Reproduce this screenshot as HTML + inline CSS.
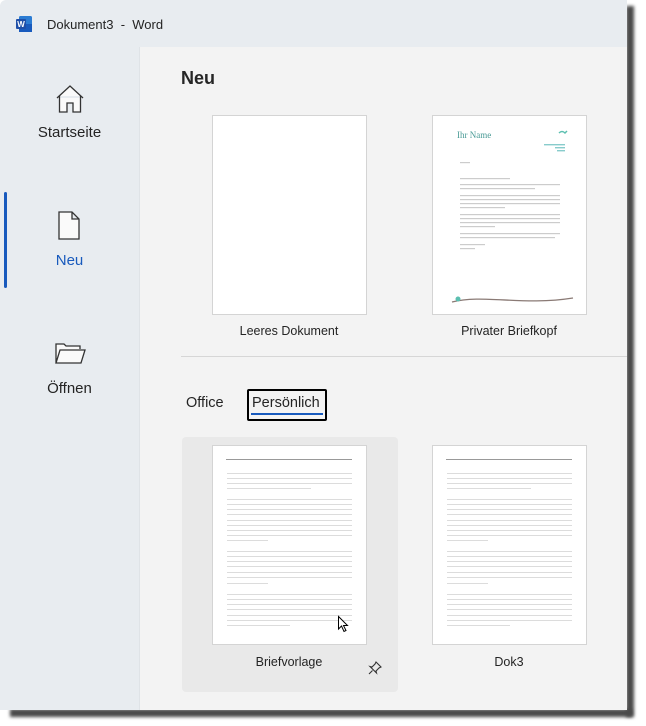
<!DOCTYPE html>
<html><head><meta charset="utf-8"><style>
*{margin:0;padding:0;box-sizing:border-box}
body{width:646px;height:726px;background:#fff;position:relative;overflow:hidden;font-family:"Liberation Sans",sans-serif;color:#242424}
.win{position:absolute;left:0;top:0;width:627px;height:710px;background:#e8ecf0;overflow:hidden;border-top-left-radius:6px}
.content{position:absolute;left:139px;top:47px;right:0;bottom:0;background:#f3f3f3;border-left:1px solid #dfe3e7}
.abs{position:absolute}
.page{position:absolute;background:#fff;border:1px solid #d4d4d4}
.lbl{position:absolute;font-size:12.5px;text-align:center;width:220px}
.side{position:absolute;width:139px;text-align:center;font-size:15px}
</style></head><body>
<div class="abs" style="left:10px;top:709px;width:622px;height:8px;background:#4a4a4a;filter:blur(1.5px)"></div>
<div class="abs" style="left:626px;top:6px;width:8px;height:711px;background:#4a4a4a;filter:blur(1.5px)"></div>
<div class="win">
  <svg class="abs" style="left:16px;top:16px" width="17" height="16" viewBox="0 0 17 16">
    <rect x="3" y="0" width="13" height="16" rx="1.5" fill="#2b7cd3"/>
    <rect x="3" y="8" width="13" height="8" fill="#185abd"/>
    <rect x="0" y="3" width="10" height="10" rx="1" fill="#1e4fa8"/>
    <text x="5" y="11" font-size="8" font-weight="bold" fill="#fff" text-anchor="middle" font-family="Liberation Sans">W</text>
  </svg>
  <div class="abs" style="left:47px;top:17px;font-size:13px">Dokument3&nbsp; - &nbsp;Word</div>

  <svg class="abs" style="left:55px;top:84px" width="30" height="30" viewBox="0 0 30 30" fill="#fafafa" stroke="#333" stroke-width="1.3">
    <path d="M2 14 L15 2 L28 14 M4.5 12 V28 H12 V19 H18 V28 H25.5 V12"/>
  </svg>
  <div class="side" style="top:124px">Startseite</div>
  <div class="abs" style="left:4px;top:192px;width:3px;height:96px;background:#185abd;border-radius:2px"></div>
  <svg class="abs" style="left:58px;top:211px" width="24" height="30" viewBox="0 0 24 30" fill="#fafafa" stroke="#333" stroke-width="1.3">
    <path d="M1 1 H14 L21 8 V28 H1 Z M14 1 V8 H21"/>
  </svg>
  <div class="side" style="top:252px;color:#185abd">Neu</div>
  <svg class="abs" style="left:55px;top:343px" width="32" height="22" viewBox="0 0 32 22" fill="#fafafa" stroke="#333" stroke-width="1.3">
    <path d="M1 20 V1 H9 L11 3 H25 V6 M1 20 L5 7 H30 L26 20 Z"/>
  </svg>
  <div class="side" style="top:380px">Öffnen</div>

  <div class="content">
    <div class="abs" style="left:41px;top:21px;font-size:18px;font-weight:bold;color:#262626">Neu</div>
    <div class="page" style="left:72px;top:68px;width:155px;height:200px"></div>
    <div class="lbl" style="left:39px;top:277px">Leeres Dokument</div>
    <div class="page" style="left:292px;top:68px;width:155px;height:200px">
      <svg width="153" height="198" viewBox="0 0 153 198">
        <text x="24" y="22" font-family="Liberation Serif" font-size="9" fill="#4a9b96">Ihr Name</text>
        <path d="M126 17 q3 -3 6 0 l2 -2" stroke="#5bbfb0" stroke-width="1.5" fill="none"/>
        <rect x="111" y="28" width="21" height="1.4" fill="#8cc"/><rect x="122" y="31" width="10" height="1.4" fill="#8cc"/><rect x="124" y="34" width="8" height="1.4" fill="#8cc"/>
        <g fill="#ccc">
          <rect x="27" y="46" width="10" height="1.2"/>
          <rect x="27" y="62" width="50" height="1.2"/>
          <rect x="27" y="68" width="100" height="1.2"/><rect x="27" y="72" width="75" height="1.2"/>
          <rect x="27" y="79" width="100" height="1.2"/><rect x="27" y="83" width="100" height="1.2"/><rect x="27" y="87" width="100" height="1.2"/><rect x="27" y="91" width="45" height="1.2"/>
          <rect x="27" y="98" width="100" height="1.2"/><rect x="27" y="102" width="100" height="1.2"/><rect x="27" y="106" width="100" height="1.2"/><rect x="27" y="110" width="35" height="1.2"/>
          <rect x="27" y="117" width="100" height="1.2"/><rect x="27" y="121" width="95" height="1.2"/>
          <rect x="27" y="128" width="25" height="1.2"/><rect x="27" y="132" width="15" height="1.2"/>
        </g>
        <path d="M19 186 C50 178 90 190 140 182" stroke="#8a7a75" stroke-width="1.3" fill="none"/>
        <circle cx="25" cy="183" r="2.5" fill="#5bbfb0"/>
      </svg>
    </div>
    <div class="lbl" style="left:259px;top:277px">Privater Briefkopf</div>
    <div class="abs" style="left:41px;top:309px;width:450px;height:1px;background:#d6d6d6"></div>
    <div class="abs" style="left:46px;top:348px;font-size:14.5px">Office</div>
    <div class="abs" style="left:107px;top:342px;width:80px;height:32px;border:2px solid #000;border-radius:2px"></div>
    <div class="abs" style="left:112px;top:348px;font-size:14.5px">Persönlich</div>
    <div class="abs" style="left:111px;top:366px;width:72px;height:2px;background:#185abd"></div>
    <div class="abs" style="left:42px;top:390px;width:216px;height:255px;background:#e9e9e9;border-radius:4px"></div>
    <div class="page" style="left:72px;top:398px;width:155px;height:200px"><svg width="153" height="198"><g id="ln">
      <rect x="13" y="13" width="126" height="1" fill="#999"/>
      <g fill="#dcdcdc">
      <rect x="14" y="27" width="125" height="1"/><rect x="14" y="32" width="125" height="1"/><rect x="14" y="37" width="125" height="1"/><rect x="14" y="42" width="84" height="1"/>
      <rect x="14" y="53" width="125" height="1"/><rect x="14" y="58" width="125" height="1"/><rect x="14" y="63" width="125" height="1"/><rect x="14" y="68" width="125" height="1"/><rect x="14" y="74" width="125" height="1"/><rect x="14" y="79" width="125" height="1"/><rect x="14" y="84" width="125" height="1"/><rect x="14" y="89" width="125" height="1"/><rect x="14" y="94" width="41" height="1"/>
      <rect x="14" y="105" width="125" height="1"/><rect x="14" y="110" width="125" height="1"/><rect x="14" y="115" width="125" height="1"/><rect x="14" y="120" width="125" height="1"/><rect x="14" y="126" width="125" height="1"/><rect x="14" y="131" width="125" height="1"/><rect x="14" y="137" width="41" height="1"/>
      <rect x="14" y="148" width="125" height="1"/><rect x="14" y="153" width="125" height="1"/><rect x="14" y="158" width="125" height="1"/><rect x="14" y="163" width="125" height="1"/><rect x="14" y="169" width="125" height="1"/><rect x="14" y="174" width="125" height="1"/><rect x="14" y="179" width="63" height="1"/>
      </g></g>
      <path d="M125.5 170.5 V183 L128.5 180 L131 185.5 L133 184.5 L130.5 179.5 H134.5 Z" fill="#fff" stroke="#000" stroke-width="1"/>
    </svg></div>
    <div class="lbl" style="left:39px;top:608px">Briefvorlage</div>
    <svg class="abs" style="left:228px;top:614px" width="14" height="14" viewBox="0 0 14 14" fill="none" stroke="#333" stroke-width="1.1"><path d="M8 1 L13 6 L11 7 L8 10 L8.5 12 L2 5.5 L4 6 L7 3 Z M4.5 9.5 L1 13"/></svg>
    <div class="page" style="left:292px;top:398px;width:155px;height:200px"><svg width="153" height="198"><use href="#ln"/></svg></div>
    <div class="lbl" style="left:259px;top:608px">Dok3</div>
  </div>
</div>
</body></html>
